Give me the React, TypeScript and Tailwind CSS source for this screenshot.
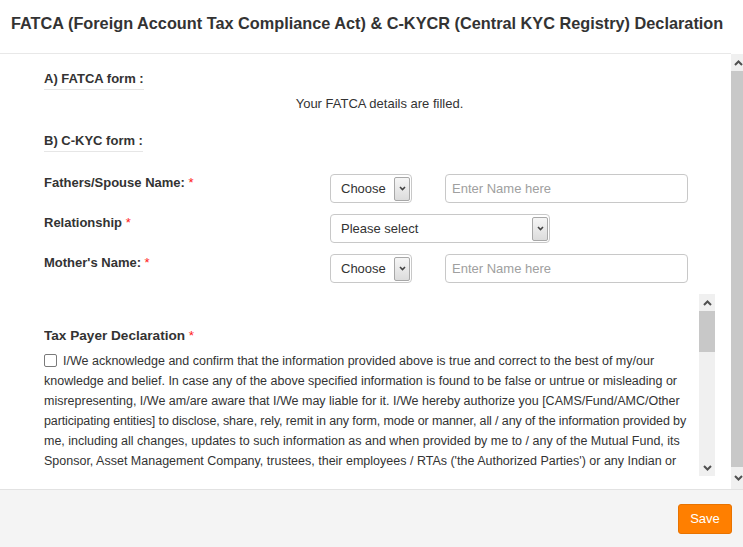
import React from "react";

const font = { fontFamily: '"Liberation Sans", Arial, sans-serif' };

const Chevron = ({ up }: { up?: boolean }) => (
  <svg width="9" height="6" viewBox="0 0 9 6">
    <polyline
      points={up ? "1,5 4.5,1.5 8,5" : "1,1 4.5,4.5 8,1"}
      fill="none"
      stroke="#505050"
      strokeWidth="2"
    />
  </svg>
);

const Req = () => <span className="text-[#ff2020] font-normal"> *</span>;

const SectionTitle = ({ children }: { children: React.ReactNode }) => (
  <div className="w-fit border-b border-[#e6e6e6] text-[13px] leading-[20px] font-bold text-[#333]">
    {children}
  </div>
);

const FakeSelect = ({ label, width }: { label: string; width: string }) => (
  <div
    className={`${width} h-[29px] border border-[#c8c8c8] rounded-[4px] bg-white flex items-center justify-between pl-[10px] pr-[1px]`}
  >
    <span className="text-[13px] text-[#333]">{label}</span>
    <div className="w-[16px] h-[24px] border border-[#a8a8a8] rounded-[2px] bg-gradient-to-b from-[#f6f6f6] to-[#dcdcdc] flex items-center justify-center">
      <svg width="7" height="5" viewBox="0 0 7 5">
        <polyline points="1,1 3.5,3.5 6,1" fill="none" stroke="#444" strokeWidth="1.6" />
      </svg>
    </div>
  </div>
);

const NameInput = () => (
  <div className="w-[243px] h-[29px] border border-[#c8c8c8] rounded-[4px] bg-white flex items-center px-[6px]">
    <span className="text-[13px] text-[#a0a0a0]">Enter Name here</span>
  </div>
);

const Row = ({ label, children }: { label: string; children: React.ReactNode }) => (
  <div className="flex">
    <div className="w-[286px] text-[13px] leading-[18px] font-bold text-[#333]">
      {label}
      <Req />
    </div>
    <div className="flex gap-[33px]">{children}</div>
  </div>
);

// line breaks kept as in the original dialog
const declaration = [
  { text: "I/We acknowledge and confirm that the information provided above is true and correct to the best of my/our", cls: "" },
  { text: "knowledge and belief. In case any of the above specified information is found to be false or untrue or misleading or", cls: "" },
  { text: "misrepresenting, I/We am/are aware that I/We may liable for it. I/We hereby authorize you [CAMS/Fund/AMC/Other", cls: "" },
  { text: "participating entities] to disclose, share, rely, remit in any form, mode or manner, all / any of the information provided by", cls: "tracking-[-0.12px]" },
  { text: "me, including all changes, updates to such information as and when provided by me to / any of the Mutual Fund, its", cls: "" },
  { text: "Sponsor, Asset Management Company, trustees, their employees / RTAs ('the Authorized Parties') or any Indian or", cls: "" },
];

export default function App() {
  return (
    <div style={font} className="w-[743px] h-[547px] flex flex-col bg-white overflow-hidden">
      <div className="h-[54px] shrink-0 flex items-center px-[11px] border-b border-[#e8e8e8] mr-[12px]">
        <h1 className="text-[16.3px] font-bold text-[#333] whitespace-nowrap -mt-[6px]">
          FATCA (Foreign Account Tax Compliance Act) &amp; C-KYCR (Central KYC Registry) Declaration
        </h1>
      </div>

      <div className="flex-1 flex min-h-0">
        <div className="flex-1 pl-[44px] pr-[16px] pt-[15px] overflow-hidden">
          <SectionTitle>A) FATCA form :</SectionTitle>
          <p className="text-[13px] leading-[20px] text-[#333] text-center mt-[4px]">
            Your FATCA details are filled.
          </p>
          <div className="mt-[17px]">
            <SectionTitle>B) C-KYC form :</SectionTitle>
          </div>

          <div className="mt-[22px] flex flex-col gap-[11px]">
            <Row label="Fathers/Spouse Name:">
              <FakeSelect label="Choose" width="w-[82px]" />
              <NameInput />
            </Row>
            <Row label="Relationship">
              <FakeSelect label="Please select" width="w-[220px]" />
            </Row>
            <Row label="Mother's Name:">
              <FakeSelect label="Choose" width="w-[82px]" />
              <NameInput />
            </Row>
          </div>

          <div className="mt-[11px] h-[182px] flex">
            <div className="flex-1 overflow-hidden pt-[32px]">
              <div className="text-[13.6px] leading-[20px] font-bold text-[#333]">
                Tax Payer Declaration
                <Req />
              </div>
              <div className="mt-[5px] text-[12.5px] leading-[20px] text-[#333] whitespace-nowrap">
                {declaration.map((line, i) => (
                  <div key={i} className={line.cls}>
                    {i === 0 && (
                      <span className="inline-block w-[13px] h-[13px] border border-[#7a7a7a] rounded-[2px] bg-white align-[-2px] mr-[6px]" />
                    )}
                    {line.text}
                  </div>
                ))}
              </div>
            </div>
            <div className="w-[16px] flex flex-col bg-[#f0f0f0]">
              <div className="h-[17px] flex items-center justify-center">
                <Chevron up />
              </div>
              <div className="h-[41px] bg-[#c8c8c8]" />
              <div className="flex-1" />
              <div className="h-[17px] flex items-center justify-center">
                <Chevron />
              </div>
            </div>
          </div>
        </div>

        <div className="w-[12px] flex flex-col bg-[#f0f0f0]">
          <div className="h-[17px] flex items-center justify-center pl-[2px]">
            <Chevron up />
          </div>
          <div className="flex-1 bg-[#c8c8c8]" />
          <div className="h-[22px] flex items-center justify-center pl-[2px]">
            <Chevron />
          </div>
        </div>
      </div>

      <div className="h-[58px] shrink-0 bg-[#f4f4f4] border-t border-[#e2e2e2] flex items-center justify-end pr-[11px]">
        <button className="w-[54px] h-[30px] rounded-[3px] bg-[#ff7f00] border border-[#e87300] text-white text-[13px]">
          Save
        </button>
      </div>
    </div>
  );
}
